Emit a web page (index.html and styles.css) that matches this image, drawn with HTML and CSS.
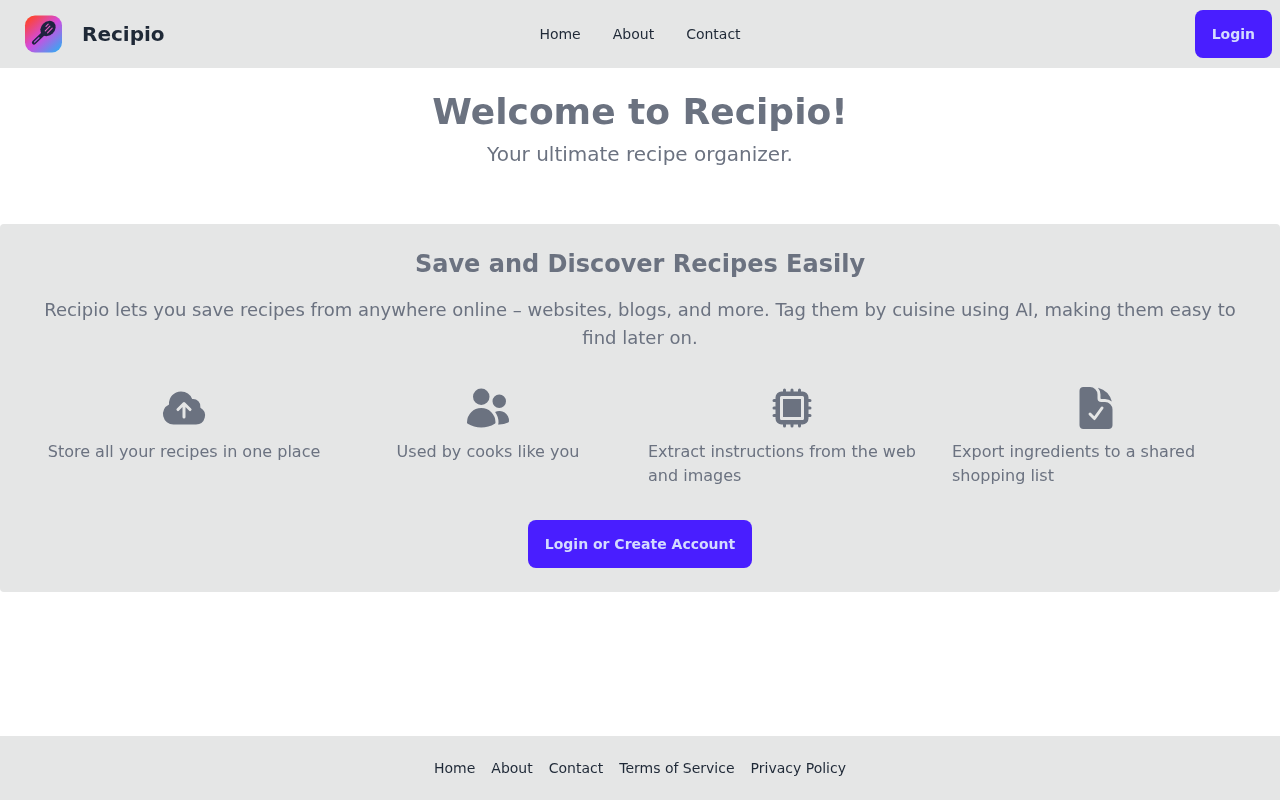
FILE: index.html
```html
<!DOCTYPE html>
<html lang="en">
<head>
    <meta charset="UTF-8">
    <meta name="viewport" content="width=device-width, initial-scale=1.0">
    <title>Recipio</title>
    <link rel="stylesheet" href="styles.css">
</head>
<body>
    <header class="navbar">
        <a class="brand" href="#">
            <svg class="brand-logo" viewBox="0 0 40 40" aria-hidden="true">
                <defs>
                    <linearGradient id="logoGrad" x1="0.1" y1="0.05" x2="0.9" y2="0.95">
                        <stop offset="0" stop-color="#ff4429"/>
                        <stop offset="0.5" stop-color="#d24be0"/>
                        <stop offset="1" stop-color="#3aa6f2"/>
                    </linearGradient>
                </defs>
                <rect x="1" y="1.5" width="37" height="37" rx="10" fill="url(#logoGrad)"/>
                <path d="M10 28.5l10-9.5" fill="none" stroke="#1e2340" stroke-width="4.2" stroke-linecap="round"/>
                <path d="M10.5 28l4.5-4.3" fill="none" stroke="#b04fd8" stroke-width="1.2" stroke-linecap="round"/>
                <ellipse cx="24" cy="14.5" rx="6.8" ry="8.4" transform="rotate(45 24 14.5)" fill="#1e2340"/>
                <path d="M21.3 16.8l4.6-4.6M23.6 18.8l4.6-4.6M24.2 10.2l-2.2 2.2" fill="none" stroke="#e05cc0" stroke-width="1.2" stroke-linecap="round"/>
            </svg>
            <span class="brand-name">Recipio</span>
        </a>
        <nav class="nav-links">
            <a href="#">Home</a>
            <a href="#">About</a>
            <a href="#">Contact</a>
        </nav>
        <div class="nav-end">
            <a class="btn" href="#">Login</a>
        </div>
    </header>

    <main>
        <div class="hero">
            <h1>Welcome to Recipio!</h1>
            <p>Your ultimate recipe organizer.</p>
        </div>

        <section class="intro">
            <h2>Save and Discover Recipes Easily</h2>
            <p class="intro-text">Recipio lets you save recipes from anywhere online – websites, blogs, and more. Tag them by cuisine using AI, making them easy to find later on.</p>

            <div class="features">
                <div class="feature">
                    <svg class="feature-icon" viewBox="0 0 24 24" aria-hidden="true">
                        <path fill-rule="evenodd" clip-rule="evenodd" d="M10.5 3.75a6 6 0 0 0-5.98 6.496A5.25 5.25 0 0 0 6.75 20.25H18a4.5 4.5 0 0 0 2.206-8.423 3.75 3.75 0 0 0-4.133-4.303A6.001 6.001 0 0 0 10.5 3.75Zm2.03 5.47a.75.75 0 0 0-1.06 0l-3 3a.75.75 0 1 0 1.06 1.06l1.72-1.72v4.94a.75.75 0 0 0 1.5 0v-4.94l1.72 1.72a.75.75 0 1 0 1.06-1.06l-3-3Z"/>
                    </svg>
                    <p>Store all your recipes in one place</p>
                </div>
                <div class="feature">
                    <svg class="feature-icon" viewBox="0 0 24 24" aria-hidden="true">
                        <path d="M4.5 6.375a4.125 4.125 0 1 1 8.25 0 4.125 4.125 0 0 1-8.25 0ZM14.25 8.625a3.375 3.375 0 1 1 6.75 0 3.375 3.375 0 0 1-6.75 0ZM1.5 19.125a7.125 7.125 0 0 1 14.25 0v.003l-.001.119a.75.75 0 0 1-.363.63 13.067 13.067 0 0 1-6.761 1.873c-2.472 0-4.786-.684-6.76-1.873a.75.75 0 0 1-.364-.63l-.001-.122ZM17.25 19.128l-.001.144a2.25 2.25 0 0 1-.233.96 10.088 10.088 0 0 0 5.06-1.01.75.75 0 0 0 .42-.643 4.875 4.875 0 0 0-6.957-4.611 8.586 8.586 0 0 1 1.71 5.157v.003Z"/>
                    </svg>
                    <p>Used by cooks like you</p>
                </div>
                <div class="feature">
                    <svg class="feature-icon" viewBox="0 0 24 24" aria-hidden="true">
                        <path d="M16.5 7.5h-9v9h9v-9Z"/>
                        <path fill-rule="evenodd" clip-rule="evenodd" d="M8.25 2.25A.75.75 0 0 1 9 3v.75h2.25V3a.75.75 0 0 1 1.5 0v.75H15V3a.75.75 0 0 1 1.5 0v.75h.75a3 3 0 0 1 3 3v.75H21A.75.75 0 0 1 21 9h-.75v2.25H21a.75.75 0 0 1 0 1.5h-.75V15H21a.75.75 0 0 1 0 1.5h-.75v.75a3 3 0 0 1-3 3h-.75V21a.75.75 0 0 1-1.5 0v-.75h-2.25V21a.75.75 0 0 1-1.5 0v-.75H9V21a.75.75 0 0 1-1.5 0v-.75h-.75a3 3 0 0 1-3-3v-.75H3A.75.75 0 0 1 3 15h.75v-2.25H3a.75.75 0 0 1 0-1.5h.75V9H3a.75.75 0 0 1 0-1.5h.75v-.75a3 3 0 0 1 3-3h.75V3a.75.75 0 0 1 .75-.75ZM6 6.75A.75.75 0 0 1 6.75 6h10.5a.75.75 0 0 1 .75.75v10.5a.75.75 0 0 1-.75.75H6.75a.75.75 0 0 1-.75-.75V6.75Z"/>
                    </svg>
                    <p>Extract instructions from the web and images</p>
                </div>
                <div class="feature">
                    <svg class="feature-icon" viewBox="0 0 24 24" aria-hidden="true">
                        <path fill-rule="evenodd" clip-rule="evenodd" d="M9 1.5H5.625c-1.036 0-1.875.84-1.875 1.875v17.25c0 1.035.84 1.875 1.875 1.875h12.75c1.035 0 1.875-.84 1.875-1.875V12.75A3.75 3.75 0 0 0 16.5 9h-1.875a1.875 1.875 0 0 1-1.875-1.875V5.25A3.75 3.75 0 0 0 9 1.5Zm6.61 10.936a.75.75 0 1 0-1.22-.872l-3.236 4.53L9.53 14.47a.75.75 0 0 0-1.06 1.06l2.25 2.25a.75.75 0 0 0 1.14-.094l3.75-5.25Z"/>
                        <path d="M12.971 1.816A5.23 5.23 0 0 1 14.25 5.25v1.875c0 .207.168.375.375.375H16.5a5.23 5.23 0 0 1 3.434 1.279 9.768 9.768 0 0 0-6.963-6.963Z"/>
                    </svg>
                    <p>Export ingredients to a shared shopping list</p>
                </div>
            </div>

            <div class="intro-action">
                <a class="btn" href="#">Login or Create Account</a>
            </div>
        </section>
    </main>

    <footer class="footer">
        <a href="#">Home</a>
        <a href="#">About</a>
        <a href="#">Contact</a>
        <a href="#">Terms of Service</a>
        <a href="#">Privacy Policy</a>
    </footer>
</body>
</html>
```

FILE: styles.css
```css
* {
    box-sizing: border-box;
}
html, body {
    height: 100%;
}
body {
    margin: 0;
    display: flex;
    flex-direction: column;
    font-family: "DejaVu Sans", sans-serif;
    background-color: #fff;
    color: #1f2937;
    will-change: opacity;
}
a {
    color: inherit;
    text-decoration: none;
}
h1, h2, p {
    margin: 0;
}

/* top bar */
.navbar {
    display: grid;
    grid-template-columns: 1fr auto 1fr;
    align-items: center;
    height: 68px;
    padding: 0 8px;
    background-color: #e5e6e6;
}
.brand {
    display: flex;
    align-items: center;
    gap: 18px;
    padding-left: 16px;
}
.brand-logo {
    width: 40px;
    height: 40px;
}
.brand-name {
    font-size: 20px;
    font-weight: 700;
    line-height: 28px;
}
.nav-links {
    display: flex;
    font-size: 14px;
    line-height: 20px;
}
.nav-links a {
    padding: 8px 16px;
}
.nav-end {
    display: flex;
    justify-content: flex-end;
}
.btn {
    display: inline-flex;
    align-items: center;
    height: 48px;
    padding: 0 17px;
    border-radius: 8px;
    background-color: #491eff;
    color: #d4dbff;
    font-size: 14px;
    font-weight: 600;
}

/* main content */
main {
    flex: 1;
    padding-top: 24px;
}
.hero {
    text-align: center;
    color: #6b7280;
}
.hero h1 {
    font-size: 36px;
    line-height: 40px;
    font-weight: 700;
    margin-bottom: 8px;
}
.hero p {
    font-size: 20px;
    line-height: 28px;
}
.intro {
    margin-top: 56px;
    padding: 24px 40px;
    border-radius: 4px;
    background-color: #e5e6e6;
    color: #6b7280;
}
.intro h2 {
    font-size: 24px;
    line-height: 32px;
    font-weight: 600;
    text-align: center;
    margin-bottom: 16px;
}
.intro-text {
    font-size: 18px;
    line-height: 28px;
    text-align: center;
    margin-bottom: 32px;
}
.features {
    display: grid;
    grid-template-columns: repeat(4, 1fr);
    gap: 16px;
}
.feature {
    display: flex;
    flex-direction: column;
    align-items: center;
    gap: 8px;
    font-size: 16px;
    line-height: 24px;
}
.feature-icon {
    width: 48px;
    height: 48px;
    fill: currentColor;
}
.intro-action {
    display: flex;
    justify-content: center;
    margin-top: 32px;
}

/* footer */
.footer {
    display: flex;
    justify-content: center;
    align-items: center;
    gap: 16px;
    height: 64px;
    background-color: #e5e6e6;
    font-size: 14px;
    line-height: 20px;
}
```
